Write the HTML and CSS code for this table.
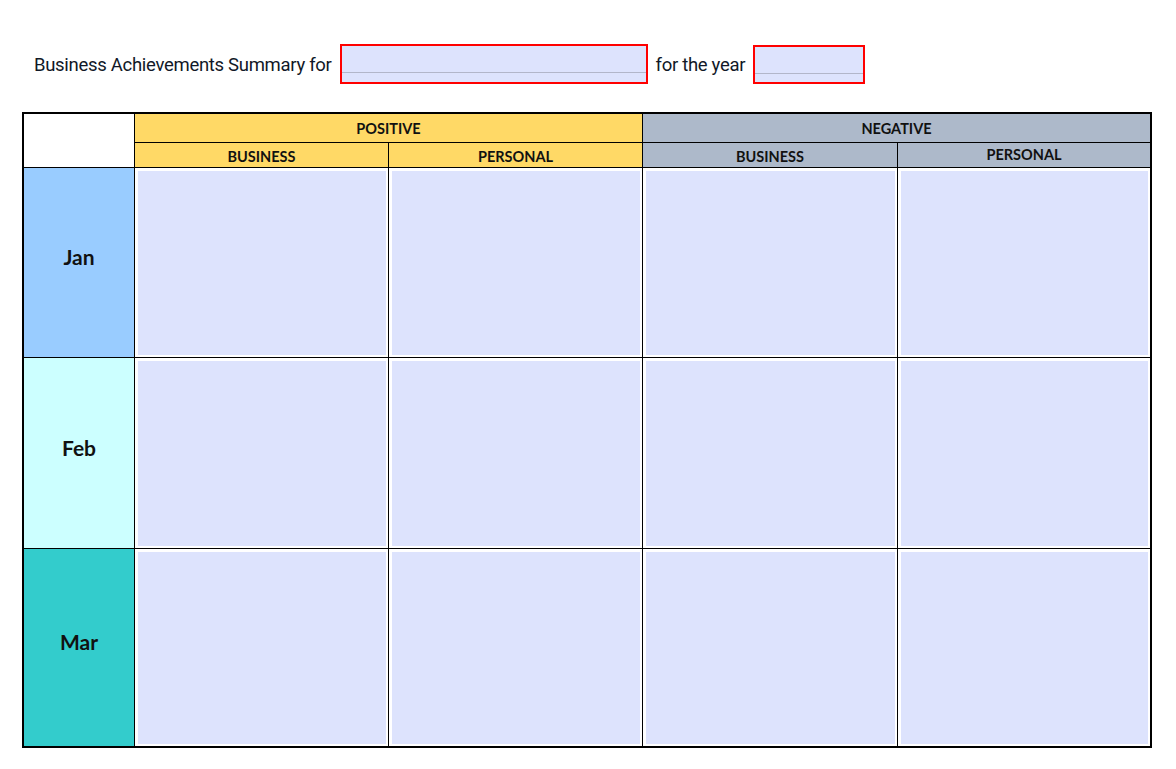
FILE: index.html
```html
<!DOCTYPE html>
<html>
<head>
<meta charset="utf-8">
<link rel="stylesheet" href="styles.css">
</head>
<body>
<div class="page">
  <div class="title-row">
    <span class="title-text">Business Achievements Summary for</span>
    <div class="field field-name"><div class="field-line"></div></div>
    <span class="title-text">for the year</span>
    <div class="field field-year"><div class="field-line"></div></div>
  </div>

  <div class="grid">
    <div class="corner"></div>
    <div class="h1 pos">POSITIVE</div>
    <div class="h1 neg">NEGATIVE</div>
    <div class="h2 pos">BUSINESS</div>
    <div class="h2 pos">PERSONAL</div>
    <div class="h2 neg">BUSINESS</div>
    <div class="h2 neg up">PERSONAL</div>

    <div class="month jan">Jan</div>
    <div class="cell"><div class="fill"></div></div>
    <div class="cell"><div class="fill"></div></div>
    <div class="cell"><div class="fill"></div></div>
    <div class="cell"><div class="fill"></div></div>

    <div class="month feb">Feb</div>
    <div class="cell"><div class="fill"></div></div>
    <div class="cell"><div class="fill"></div></div>
    <div class="cell"><div class="fill"></div></div>
    <div class="cell"><div class="fill"></div></div>

    <div class="month mar">Mar</div>
    <div class="cell"><div class="fill"></div></div>
    <div class="cell"><div class="fill"></div></div>
    <div class="cell"><div class="fill"></div></div>
    <div class="cell"><div class="fill"></div></div>
  </div>
</div>
</body>
</html>
```

FILE: styles.css
```css
html, body {
  margin: 0;
  padding: 0;
  background: #ffffff;
}

.page {
  padding: 44px 0 0 22px;
}

.title-row {
  display: flex;
  align-items: center;
  height: 40px;
  padding-left: 12px;
  gap: 8px;
}

.title-text {
  font-family: Roboto, "Liberation Sans", sans-serif;
  font-size: 18.5px;
  letter-spacing: -0.3px;
  color: #111827;
  padding-top: 2px;
}

.field {
  box-sizing: border-box;
  height: 40px;
  border: 2px solid #ff0000;
  background: #dde3fd;
}

.field-name {
  width: 308px;
}

.field-year {
  width: 112px;
  height: 39px;
}

.field-line {
  height: 26px;
  border-bottom: 1px solid #b2b6ca;
}

.grid {
  margin-top: 28px;
  width: 1130px;
  box-sizing: border-box;
  border: 2px solid #000;
  background: #000;
  display: grid;
  grid-template-columns: 110px 253px 253px 254px 252px;
  grid-template-rows: 28px 24px 189px 190px 197px;
  gap: 1px;
}

.corner {
  grid-row: 1 / span 2;
  background: #ffffff;
}

.h1 {
  grid-column: span 2;
  display: flex;
  align-items: center;
  justify-content: center;
  font-family: Lato, "Open Sans", sans-serif;
  font-weight: 700;
  font-size: 14.5px;
  color: #111;
  padding-top: 1px;
}

.h2 {
  display: flex;
  align-items: center;
  justify-content: center;
  font-family: Lato, "Open Sans", sans-serif;
  font-weight: 700;
  font-size: 14.5px;
  color: #111;
  padding-top: 2px;
}

.h2.up {
  padding-top: 0;
  padding-bottom: 2px;
}

.pos {
  background: #ffd966;
}

.neg {
  background: #adb9ca;
}

.month {
  display: flex;
  align-items: center;
  justify-content: center;
  font-family: Lato, "Open Sans", sans-serif;
  font-weight: 700;
  font-size: 21px;
  color: #111;
  padding-bottom: 12px;
}

.jan { background: #99ccff; }
.feb { background: #ccffff; }
.mar { background: #33cccc; }

.cell {
  background: #ffffff;
  padding: 3px 2px 2px 3px;
  display: flex;
}

.fill {
  flex: 1;
  background: #dde3fd;
}
```
